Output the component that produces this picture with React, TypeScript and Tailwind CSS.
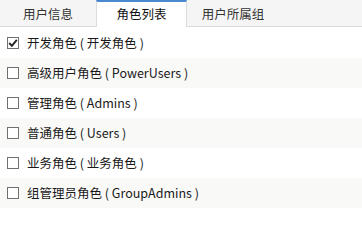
import React from 'react';

const roles = [
  { name: '开发角色', code: '开发角色', checked: true },
  { name: '高级用户角色', code: 'PowerUsers', checked: false },
  { name: '管理角色', code: 'Admins', checked: false },
  { name: '普通角色', code: 'Users', checked: false },
  { name: '业务角色', code: '业务角色', checked: false },
  { name: '组管理员角色', code: 'GroupAdmins', checked: false },
];

const tabs = ['用户信息', '角色列表', '用户所属组'];

export default function App() {
  return (
    <div
      className="w-[362px] h-[250px] bg-white overflow-hidden text-[12.5px] text-[#1a1a1a]"
      style={{ fontFamily: '"Noto Sans CJK SC", "Noto Sans", sans-serif' }}
    >
      {/* Tabs */}
      <div className="flex h-[27px] bg-[#f5f5f5] border-b border-[#dcdcdc] text-[12.5px]">
        {tabs.map((t, i) =>
          i === 1 ? (
            <div
              key={t}
              className="w-[91px] h-[27px] flex items-center justify-center bg-white border-t-2 border-t-[#4a89d0] border-x border-x-[#dcdcdc] text-[#111]"
            >
              {t}
            </div>
          ) : (
            <div key={t} className={`${i === 0 ? 'w-[96px]' : 'w-[92px]'} flex items-center justify-center pt-[2px] text-[#333]`}>
              {t}
            </div>
          )
        )}
      </div>

      {/* Role list */}
      <div className="pt-[1px]">
        {roles.map((r, i) => (
          <label
            key={r.name}
            className={`flex items-center h-[30px] pl-[7px] ${i % 2 === 1 ? 'bg-[#f9f9f8]' : 'bg-white'}`}
          >
            <span className="w-[12px] h-[12px] border border-[#707070] bg-white flex items-center justify-center">
              {r.checked && (
                <svg width="10" height="10" viewBox="0 0 10 10">
                  <path d="M1.2 5 L3.9 7.8 L8.8 1.8" fill="none" stroke="#222" strokeWidth="1.9" />
                </svg>
              )}
            </span>
            <span className="ml-[8px]">
              {r.name} ( {r.code} )
            </span>
          </label>
        ))}
      </div>
    </div>
  );
}
